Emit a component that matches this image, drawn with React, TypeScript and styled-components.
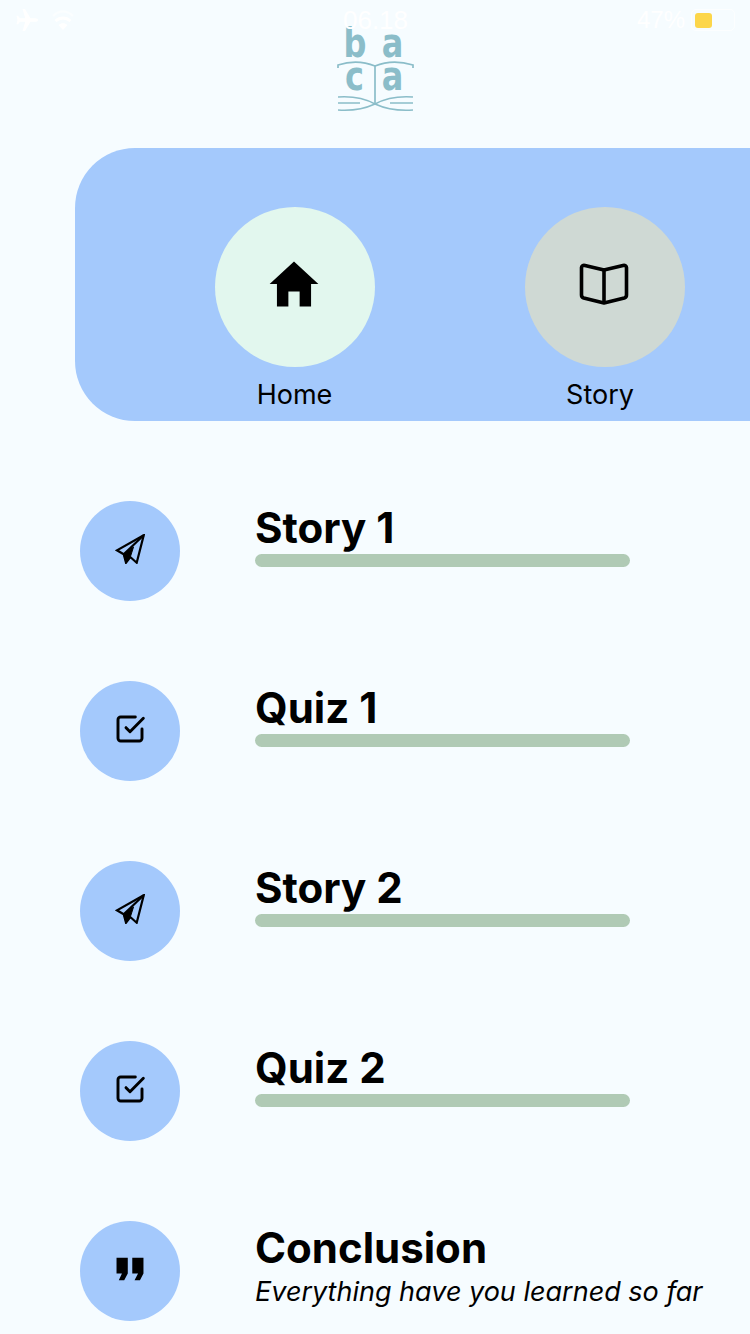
import React from "react";
import styled, { createGlobalStyle } from "styled-components";
import { IoMdHome, IoMdQuote } from "react-icons/io";
import { FiCheckSquare } from "react-icons/fi";

const GlobalStyle = createGlobalStyle`
  html, body {
    margin: 0;
    padding: 0;
    background: #f6fcff;
  }
  body {
    font-family: Inter, "Liberation Sans", sans-serif;
    color: #000;
  }
`;

const Screen = styled.div`
  position: relative;
  width: 750px;
  height: 1334px;
  overflow: hidden;
  background: #f6fcff;
`;

const StatusBar = styled.div`
  position: absolute;
  top: 0;
  left: 0;
  right: 0;
  height: 40px;
  display: flex;
  align-items: center;
  justify-content: space-between;
  padding: 0 15px 0 16px;
  color: #fff;
  font-family: "Liberation Sans", sans-serif;
  font-size: 26px;
  z-index: 2;
`;

const StatusSide = styled.div<{ $end?: boolean }>`
  flex: 1;
  display: flex;
  align-items: center;
  gap: ${(p) => (p.$end ? 6 : 14)}px;
  justify-content: ${(p) => (p.$end ? "flex-end" : "flex-start")};
`;

const Percent = styled.span`
  font-size: 24px;
`;

const Battery = styled.div`
  width: 44px;
  height: 22px;
  border: 1px solid rgba(255, 255, 255, 0.7);
  border-radius: 5px;
  padding: 2.5px 3px;
  display: flex;
  box-sizing: border-box;
`;

const BatteryLevel = styled.div`
  width: 17px;
  background: #fcd64a;
  border-radius: 3px;
`;

const Header = styled.header`
  height: 148px;
  display: flex;
  justify-content: center;
  padding-top: 4px;
  box-sizing: border-box;
`;

const Panel = styled.nav`
  margin-left: 75px;
  height: 273px;
  padding: 59px 0 0 140px;
  box-sizing: border-box;
  background: #a4c9fc;
  border-radius: 60px 0 0 60px;
  display: flex;
  gap: 150px;
`;

const NavItem = styled.div`
  width: 160px;
  display: flex;
  flex-direction: column;
  align-items: center;
`;

const NavCircle = styled.div<{ $bg: string }>`
  width: 160px;
  height: 160px;
  padding: 0 2px 6px 0;
  box-sizing: border-box;
  border-radius: 50%;
  background: ${(p) => p.$bg};
  display: flex;
  align-items: center;
  justify-content: center;
`;

const NavLabel = styled.div<{ $shift: number }>`
  margin-top: 11px;
  font-size: 27px;
  line-height: 33px;
  margin-left: ${(p) => p.$shift}px;
`;

const List = styled.ul`
  list-style: none;
  margin: 80px 0 0;
  padding: 0 0 0 80px;
  display: flex;
  flex-direction: column;
  gap: 80px;
`;

const Row = styled.li`
  display: flex;
  height: 100px;
`;

const IconCircle = styled.div`
  width: 100px;
  height: 100px;
  flex: none;
  padding: 0 1px 5px 0;
  box-sizing: border-box;
  border-radius: 50%;
  background: #a4c9fc;
  display: flex;
  align-items: center;
  justify-content: center;
`;

const RowBody = styled.div`
  margin-left: 75px;
  display: flex;
  flex-direction: column;
`;

const Title = styled.div`
  font-size: 42px;
  font-weight: 700;
  line-height: 48px;
  margin-top: 3px;
`;

const Bar = styled.div`
  width: 375px;
  height: 13px;
  margin-top: 2px;
  border-radius: 7px;
  background: #b0cab5;
`;

const Subtitle = styled.div`
  margin-top: 3px;
  font-size: 27px;
  font-style: italic;
  line-height: 33px;
  white-space: nowrap;
`;

const LogoBox = styled.svg`
  display: block;
  width: 78px;
  height: 112px;
`;

const letters = [
  { ch: "b", x: 19, y: 35 },
  { ch: "a", x: 56.5, y: 35 },
  { ch: "c", x: 18.5, y: 68 },
  { ch: "a", x: 56.5, y: 68 },
];

const Logo = () => (
  <LogoBox viewBox="0 -18 78 112">
    <g fill="#8bbdc9" fontFamily="'DejaVu Sans', sans-serif" fontWeight="700" fontSize="40" textAnchor="middle">
      {letters.map((l, i) => (
        <text key={i} transform={`translate(${l.x} ${l.y}) scale(0.8 1)`}>
          {l.ch}
        </text>
      ))}
    </g>
    <g fill="none" stroke="#8bbdc9" strokeWidth="1.7">
      <path d="M2 46v-3c12-4 25-4 37 1 12-5 25-5 38-1v3" />
      <path d="M39 44v37" />
      <path d="M2 75c14-1 26 1 37 7 11-6 24-8 38-7" />
      <path d="M2 81h22M54 81h23" />
      <path d="M2 88c14 1 26-1 37-6 11 5 24 7 38 6" />
    </g>
  </LogoBox>
);

const AirplaneIcon = () => (
  <svg width="22" height="22" viewBox="0 0 22 22" fill="#fff">
    <path d="M22 11c0-1-1-1.800-2.500-1.800h-5L9 0H6.500l2.800 9.200H4L2 6.800H.500L1.500 11 .500 15.200H2L4 12.800h5.300L6.500 22H9l5.500-9.200h5C21 12.800 22 12 22 11z" />
  </svg>
);

const WifiIcon = () => (
  <svg width="22" height="22" viewBox="0 0 22 22" fill="none">
    <path d="M1 7c6-6 14-6 20 0" stroke="#fff" strokeOpacity="0.5" strokeWidth="2.500" />
    <path d="M3.500 12c4.500-4 10.500-4 15 0" stroke="#fff" strokeWidth="3" />
    <path d="M11 21l-4.500-5c2.800-2.200 6.200-2.200 9 0z" fill="#fff" />
  </svg>
);

const BookIcon = () => (
  <svg width="50" height="44" viewBox="0 0 50 44" fill="none" stroke="#000" strokeWidth="3.600" strokeLinejoin="round">
    <path d="M25 8L6 3.500C4 3 2.500 4 2.500 5.500V33c0 1.500.7 2.500 2.200 3L25 41l20.300-5c1.500-.5 2.200-1.500 2.200-3V5.500c0-1.500-1.500-2.500-3.500-2L25 8z" />
    <path d="M25 8v33" />
  </svg>
);

const PlaneIcon = () => (
  <svg width="30" height="30" viewBox="0 0 30 30" fill="none" stroke="#000" strokeWidth="2.200" strokeLinejoin="miter">
    <path d="M28.700 1.300L2 16.300l6.700 4L11 28.700l4.300-5.700 6.400 5.700z" />
    <path d="M28.700 1.300L8.700 20.300" />
    <path d="M8.700 20.300L11 28.700l4.300-5.700 3.200-10z" fill="#000" strokeWidth="1" />
  </svg>
);

const rows = [
  { title: "Story 1", icon: "plane" },
  { title: "Quiz 1", icon: "check" },
  { title: "Story 2", icon: "plane" },
  { title: "Quiz 2", icon: "check" },
];

const App = () => (
  <Screen>
    <GlobalStyle />
    <StatusBar>
      <StatusSide>
        <AirplaneIcon />
        <WifiIcon />
      </StatusSide>
      <div>06.18</div>
      <StatusSide $end>
        <Percent>47%</Percent>
        <Battery>
          <BatteryLevel />
        </Battery>
      </StatusSide>
    </StatusBar>
    <Header>
      <Logo />
    </Header>
    <Panel>
      <NavItem>
        <NavCircle $bg="#e2f7ee">
          <IoMdHome size={60} color="#000" />
        </NavCircle>
        <NavLabel $shift={-1}>Home</NavLabel>
      </NavItem>
      <NavItem>
        <NavCircle $bg="#cfd9d4">
          <BookIcon />
        </NavCircle>
        <NavLabel $shift={-10}>Story</NavLabel>
      </NavItem>
    </Panel>
    <List>
      {rows.map((r) => (
        <Row key={r.title}>
          <IconCircle>
            {r.icon === "plane" ? <PlaneIcon /> : <FiCheckSquare size={32} strokeWidth={2.2} />}
          </IconCircle>
          <RowBody>
            <Title>{r.title}</Title>
            <Bar />
          </RowBody>
        </Row>
      ))}
      <Row>
        <IconCircle>
          <IoMdQuote size={36} />
        </IconCircle>
        <RowBody>
          <Title>Conclusion</Title>
          <Subtitle>Everything have you learned so far</Subtitle>
        </RowBody>
      </Row>
    </List>
  </Screen>
);

export default App;
